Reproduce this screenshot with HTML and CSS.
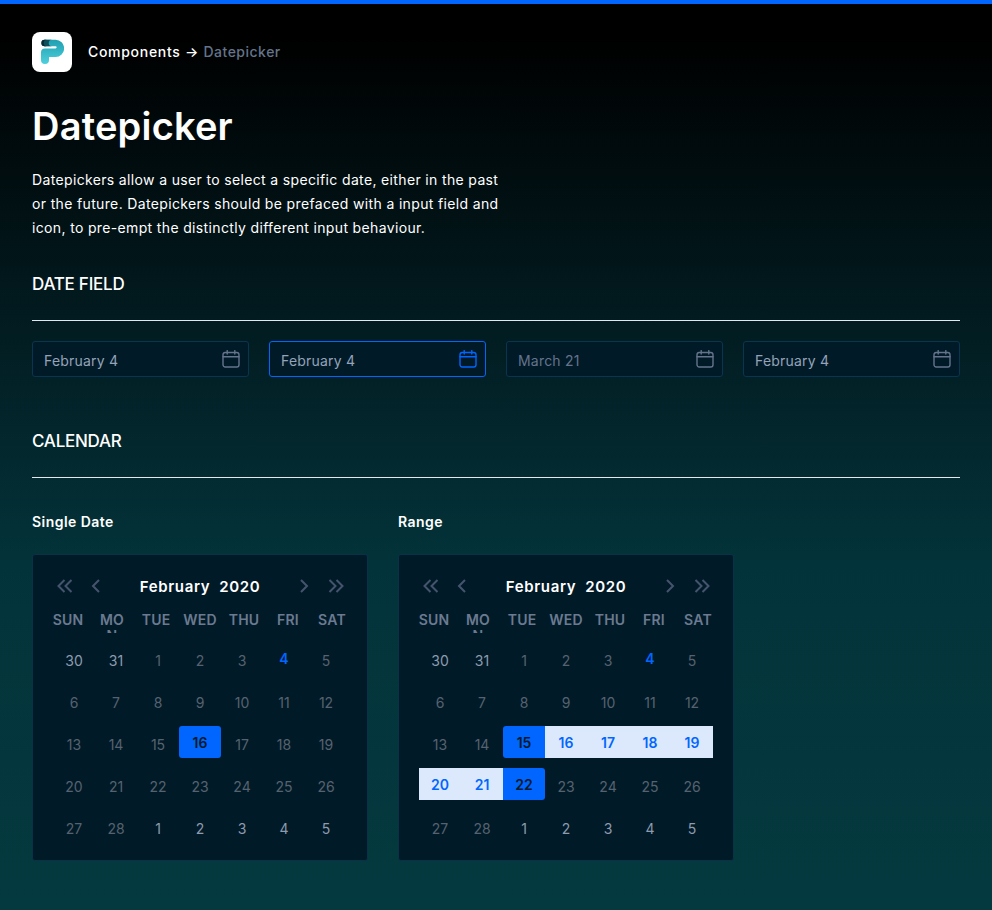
FILE: index.html
```html
<!DOCTYPE html>
<html lang="en">
<head>
<meta charset="utf-8">
<title>Datepicker</title>
<link rel="stylesheet" href="styles.css">
</head>
<body>
<svg class="defs" width="0" height="0" aria-hidden="true">
  <defs>
    <symbol id="cal" viewBox="0 0 18 18">
      <rect x="1" y="2.500" width="16" height="14.500" rx="2.200" fill="none" stroke="currentColor" stroke-width="1.400"/>
      <path d="M1 6.800h16M5.200.600v3.400M12.800.600v3.400" fill="none" stroke="currentColor" stroke-width="1.400" stroke-linecap="round"/>
    </symbol>
    <symbol id="dl" viewBox="0 0 16 14"><path d="M7.500 1 1.500 7l6 6M14.500 1l-6 6 6 6" fill="none" stroke="currentColor" stroke-width="2"/></symbol>
    <symbol id="dr" viewBox="0 0 16 14"><path d="M8.500 1l6 6-6 6M1.500 1l6 6-6 6" fill="none" stroke="currentColor" stroke-width="2"/></symbol>
    <symbol id="sl" viewBox="0 0 10 14"><path d="M8 1 2 7l6 6" fill="none" stroke="currentColor" stroke-width="2"/></symbol>
    <symbol id="sr" viewBox="0 0 10 14"><path d="M2 1l6 6-6 6" fill="none" stroke="currentColor" stroke-width="2"/></symbol>
    <linearGradient id="pg" x1="0" y1="0" x2="0" y2="1"><stop offset="0" stop-color="#1f9fb0"/><stop offset="1" stop-color="#4fd0dc"/></linearGradient>
  </defs>
</svg>
<div class="topbar"></div>
<main class="page">
  <header class="crumbs">
    <div class="logo">
      <svg width="24" height="26" viewBox="0 0 24 26">
        <path d="M5 .7H15.500A8.650 8.650 0 0 1 15.500 18H9V21A4 4 0 0 1 1 21V13.500A4 4 0 0 1 5 9.500H15.500A1.150 1.150 0 0 0 15.500 7.200H5A3.250 3.250 0 0 1 5 .7Z" fill="url(#pg)"/>
        <path d="M5 .7H12A3.250 3.250 0 0 0 12 7.200H5A3.250 3.250 0 0 1 5 .7Z" fill="#0e4f5b"/>
        <path d="M4.500 .7H7A3.250 3.250 0 0 0 7 7.200H4.500A3.250 3.250 0 0 1 4.500 .7Z" fill="#062b34"/>
      </svg>
    </div>
    <p class="trail">Components → <span class="trail-cur">Datepicker</span></p>
  </header>
  <h1 class="title">Datepicker</h1>
  <p class="intro">Datepickers allow a user to select a specific date, either in the past or the future. Datepickers should be prefaced with a input field and icon, to pre-empt the distinctly different input behaviour.</p>

  <h2 class="section">DATE FIELD</h2>
  <div class="fields">
    <div class="field"><span>February 4</span><svg class="cal"><use href="#cal"/></svg></div>
    <div class="field field-focus"><span>February 4</span><svg class="cal"><use href="#cal"/></svg></div>
    <div class="field field-muted"><span>March 21</span><svg class="cal"><use href="#cal"/></svg></div>
    <div class="field"><span>February 4</span><svg class="cal"><use href="#cal"/></svg></div>
  </div>

  <h2 class="section section-cal">CALENDAR</h2>
  <div class="cals">
    <section class="cal-col">
      <h3 class="label">Single Date</h3>
      <div class="card">
        <div class="head">
          <svg class="dbl"><use href="#dl"/></svg><svg class="sgl"><use href="#sl"/></svg>
          <b class="month">February&nbsp; 2020</b>
          <svg class="sgl"><use href="#sr"/></svg><svg class="dbl"><use href="#dr"/></svg>
        </div>
        <div class="week">
          <div class="wd">SUN</div><div class="wd wd-clip">MON</div><div class="wd">TUE</div><div class="wd">WED</div><div class="wd">THU</div><div class="wd">FRI</div><div class="wd">SAT</div>
        </div>
        <div class="grid">
          <div class="d soft">30</div><div class="d soft">31</div><div class="d">1</div><div class="d">2</div><div class="d">3</div><div class="d today"><i>4</i></div><div class="d">5</div>
          <div class="d">6</div><div class="d">7</div><div class="d">8</div><div class="d">9</div><div class="d">10</div><div class="d">11</div><div class="d">12</div>
          <div class="d">13</div><div class="d">14</div><div class="d">15</div><div class="d sel"><i>16</i></div><div class="d">17</div><div class="d">18</div><div class="d">19</div>
          <div class="d">20</div><div class="d">21</div><div class="d">22</div><div class="d">23</div><div class="d">24</div><div class="d">25</div><div class="d">26</div>
          <div class="d">27</div><div class="d">28</div><div class="d soft">1</div><div class="d soft">2</div><div class="d soft">3</div><div class="d soft">4</div><div class="d soft">5</div>
        </div>
      </div>
    </section>
    <section class="cal-col">
      <h3 class="label">Range</h3>
      <div class="card">
        <div class="head">
          <svg class="dbl"><use href="#dl"/></svg><svg class="sgl"><use href="#sl"/></svg>
          <b class="month">February&nbsp; 2020</b>
          <svg class="sgl"><use href="#sr"/></svg><svg class="dbl"><use href="#dr"/></svg>
        </div>
        <div class="week">
          <div class="wd">SUN</div><div class="wd wd-clip">MON</div><div class="wd">TUE</div><div class="wd">WED</div><div class="wd">THU</div><div class="wd">FRI</div><div class="wd">SAT</div>
        </div>
        <div class="grid">
          <div class="d soft">30</div><div class="d soft">31</div><div class="d">1</div><div class="d">2</div><div class="d">3</div><div class="d today"><i>4</i></div><div class="d">5</div>
          <div class="d">6</div><div class="d">7</div><div class="d">8</div><div class="d">9</div><div class="d">10</div><div class="d">11</div><div class="d">12</div>
          <div class="d">13</div><div class="d">14</div><div class="d start"><i>15</i></div><div class="d mid"><i>16</i></div><div class="d mid"><i>17</i></div><div class="d mid"><i>18</i></div><div class="d mid"><i>19</i></div>
          <div class="d mid"><i>20</i></div><div class="d mid"><i>21</i></div><div class="d end"><i>22</i></div><div class="d">23</div><div class="d">24</div><div class="d">25</div><div class="d">26</div>
          <div class="d">27</div><div class="d">28</div><div class="d soft">1</div><div class="d soft">2</div><div class="d soft">3</div><div class="d soft">4</div><div class="d soft">5</div>
        </div>
      </div>
    </section>
  </div>
</main>
</body>
</html>
```
FILE: styles.css
```css
* { box-sizing: border-box; }
html, body { margin: 0; padding: 0; }
body {
  width: 992px;
  height: 910px;
  overflow: hidden;
  background: linear-gradient(180deg, #000 0%, #000 4%, #021c21 36%, #03333a 62%, #043a3f 100%);
  font-family: Inter, "Liberation Sans", sans-serif;
  color: #fff;
}
.defs { position: absolute; }
.topbar { height: 4px; background: #0066ff; }
.page { padding: 28px 32px 0; }
.crumbs { display: flex; align-items: center; gap: 16px; height: 40px; }
.logo {
  width: 40px; height: 40px; border-radius: 8px; background: #fff;
  display: flex; align-items: center; justify-content: center;
}
.trail { margin: 0; font-size: 14px; font-weight: 500; line-height: 20px; color: #fff; letter-spacing: .7px; }
.trail-cur { color: #64748b; letter-spacing: .5px; }
.title { margin: 24px 0 0; font-size: 38px; font-weight: 600; line-height: 60px; letter-spacing: .2px; }
.intro { margin: 12px 0 0; width: 475px; font-size: 14px; line-height: 24px; color: #fff; letter-spacing: .35px; }
.section {
  margin: 28px 0 0; height: 53px; font-size: 17px; font-weight: 500; line-height: 32px; letter-spacing: -.25px;
  border-bottom: 1px solid #e2e8f0;
}
.fields { display: grid; grid-template-columns: repeat(4, 217px); gap: 20px; margin-top: 20px; }
.field {
  height: 36px; padding: 0 8px 0 11px; display: flex; align-items: center; justify-content: space-between;
  background: #011a28; border: 1px solid #0a3550; border-radius: 3px;
  font-size: 14px; color: #94a3b8; letter-spacing: .2px;
}
.field span { padding-top: 2px; }
.cal { width: 18px; height: 18px; color: #64748b; }
.field-focus { border-color: #0066ff; }
.field-focus .cal { color: #0066ff; }
.field-muted span { color: #64748b; }
.section-cal { margin-top: 48px; }
.cals { display: flex; gap: 30px; margin-top: 33px; }
.cal-col { width: 336px; }
.label { margin: 0; font-size: 14px; font-weight: 600; line-height: 22px; letter-spacing: .45px; }
.card {
  margin-top: 21px; width: 336px; height: 307px; padding: 18px 20px 0;
  background: #011a28; border: 1px solid #0a3147; border-radius: 3px;
}
.head { display: flex; align-items: center; height: 26px; padding: 0 3px; color: #45546d; }
.dbl { width: 16px; height: 14px; margin: 0 0 0 1px; }
.sgl { width: 10px; height: 14px; }
.head .dbl:first-child { margin-right: 18px; }
.head .dbl:last-child { margin-left: 19px; }
.month { flex: 1; text-align: center; font-size: 15px; font-weight: 600; color: #fff; white-space: nowrap; letter-spacing: .65px; }
.week { display: grid; grid-template-columns: repeat(7, 44px); margin: 13px -7px 9px; }
.wd {
  height: 21px; overflow: hidden; text-align: center; white-space: nowrap;
  font-size: 14px; font-weight: 600; line-height: 16px; color: #6b7a90; letter-spacing: .2px;
}
.wd-clip { padding: 0 9px; white-space: normal; word-break: break-all; }
.grid { display: grid; grid-template-columns: repeat(7, 42px); grid-auto-rows: 32px; row-gap: 10px; }
.d {
  display: flex; align-items: center; justify-content: center; padding-top: 4px;
  font-size: 14px; font-weight: 400; color: #56626f;
}
.soft { color: #8d9bae; }
.d i { font-style: normal; position: relative; top: -2px; }
.today { color: #0066ff; font-weight: 600; }
.sel, .start, .end { background: #0066ff; color: #011a28; font-weight: 600; }
.sel { border-radius: 3px; }
.start { border-radius: 3px 0 0 3px; }
.end { border-radius: 0 3px 3px 0; }
.mid { background: #dce9fd; color: #0066ff; font-weight: 600; }
```
